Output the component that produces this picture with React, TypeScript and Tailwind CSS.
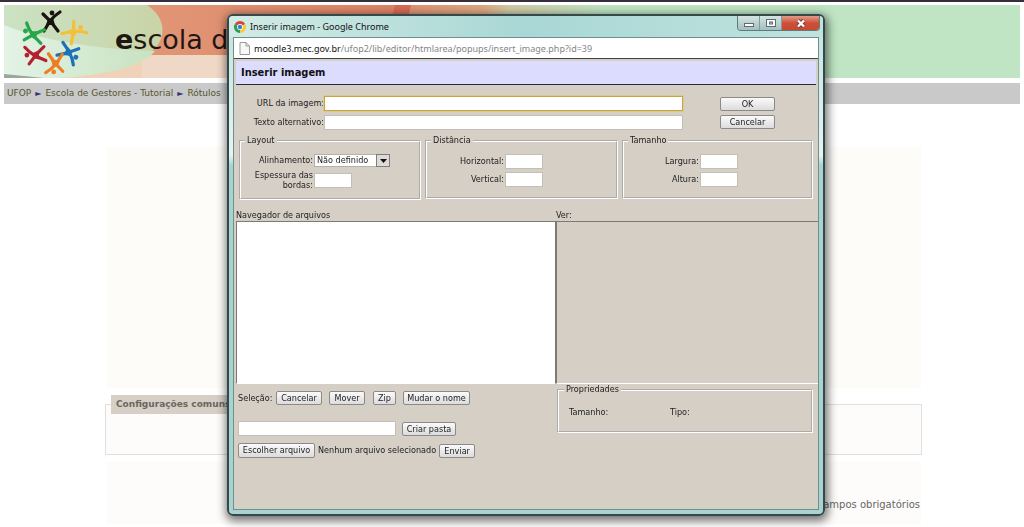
import { useState, type ReactNode } from "react";

const figures = [
  { x: 47, y: 16, turn: 0, color: "#17130f" },
  { x: 70, y: 27, turn: 48, color: "#f6bf3a" },
  { x: 65, y: 48, turn: 115, color: "#1d71b8" },
  { x: 51, y: 59, turn: 182, color: "#ec7f22" },
  { x: 31, y: 50, turn: 262, color: "#b5202f" },
  { x: 29, y: 29, turn: 285, color: "#27a64b" },
];

function BannerArt() {
  return (
    <svg className="absolute top-0 left-0" width="600" height="73" viewBox="0 0 600 73" aria-hidden="true">
      <defs>
        <linearGradient id="fade" x1="0" x2="1">
          <stop offset="0.68" stopColor="#dd9474" />
          <stop offset="0.8" stopColor="#dba983" />
          <stop offset="0.84" stopColor="#cfc9a4" />
          <stop offset="1" stopColor="#bfe5c4" />
        </linearGradient>
        <linearGradient id="salmon" x1="0" x2="1">
          <stop offset="0" stopColor="#e3a07e" />
          <stop offset="1" stopColor="#dd8467" />
        </linearGradient>
        <linearGradient id="leaf" x1="0" x2="1">
          <stop offset="0" stopColor="#cbe2c4" />
          <stop offset="1" stopColor="#c9d4a6" />
        </linearGradient>
        <linearGradient id="mint" x1="0" x2="1">
          <stop offset="0" stopColor="#e3f3e6" />
          <stop offset="1" stopColor="#c8e2c0" />
        </linearGradient>
      </defs>
      <rect width="600" height="73" fill="url(#fade)" />
      <rect width="392" height="52" fill="url(#salmon)" />
      <path d="M391 0h16l-12 52h-16z" fill="#d66b55" />
      <rect y="50" width="392" height="23" fill="#f0d8c6" />
      <path d="M0 52h138v21H0z" fill="#eed3b8" />
      <path d="M0 0h143c14 9 20 24 12 38-10 18-50 32-105 34L0 73z" fill="url(#leaf)" />
      <path d="M0 20c30 12 80 24 151 26-12 15-50 25-100 27H0z" fill="url(#mint)" />
      <path d="M0 69l40 4H0z" fill="#9aa79a" />
      {figures.map((f) => (
        <g key={f.color} transform={`translate(${f.x} ${f.y}) rotate(${f.turn})`} stroke={f.color} fill={f.color}>
          <path d="M-8-7Q-4-3-1 0Q4-6 9-9M-1 0Q-4 5-7 10M0 1Q4 6 7 10" fill="none" strokeWidth="3.200" strokeLinecap="round" />
          <path d="M-3-2L2-3L4 4L-5 4z" stroke="none" />
          <circle cx="1" cy="-8" r="2.400" stroke="none" />
        </g>
      ))}
    </svg>
  );
}

function ChromeIcon() {
  return (
    <svg width="12" height="12" viewBox="0 0 24 24" aria-hidden="true">
      <path d="M12 12L1.600 6A12 12 0 0 1 22.400 6z" fill="#dc4437" />
      <path d="M12 12L22.400 6A12 12 0 0 1 12 24z" fill="#fbc934" />
      <path d="M12 12L12 24A12 12 0 0 1 1.600 6z" fill="#2f9e4f" />
      <circle cx="12" cy="12" r="5.800" fill="#fff" />
      <circle cx="12" cy="12" r="4.400" fill="#3f7fd0" />
    </svg>
  );
}

function PageIcon() {
  return (
    <svg width="11" height="13" viewBox="0 0 11 13" aria-hidden="true">
      <path d="M1 .5h6l3.500 3.500v8.500H1z" fill="#f7f7f7" stroke="#9a9a9a" />
      <path d="M7 .5V4h3.500" fill="none" stroke="#9a9a9a" />
    </svg>
  );
}

function Button({ children, className = "" }: { children: ReactNode; className?: string }) {
  return (
    <button
      type="button"
      className={`h-[14px] rounded-[2px] border border-[#8a8a8a] bg-linear-to-b from-[#fafafa] to-[#dcdcdc] text-center leading-[12px] whitespace-nowrap text-[#1c1c1c] ${className}`}
    >
      {children}
    </button>
  );
}

const box = "h-[15px] border border-[#c3beb6] bg-white px-px outline-none";
const group = "border-2 border-white [border-style:groove]";

function SizeField({ id, label }: { id: string; label: string }) {
  return (
    <div className="flex items-center gap-px">
      <label htmlFor={id} className="flex-1 text-right">{label}</label>
      <input id={id} type="text" className={`${box} w-[38px]`} />
    </div>
  );
}

function WindowButtons() {
  return (
    <div className="flex h-[15px] overflow-hidden rounded-b-[4px] border border-t-0 border-[#5d7c7d]">
      <button type="button" aria-label="Minimizar" className="flex w-[22px] items-center justify-center border-r border-[#7f9c9c] bg-linear-to-b from-[#d5e4e3] to-[#a3bfbe]">
        <svg width="10" height="10" viewBox="0 0 10 10"><rect x=".5" y="5.500" width="9" height="3" fill="#fff" stroke="#5c6b70" /></svg>
      </button>
      <button type="button" aria-label="Maximizar" className="flex w-[22px] items-center justify-center border-r border-[#7f9c9c] bg-linear-to-b from-[#d5e4e3] to-[#a3bfbe]">
        <svg width="10" height="10" viewBox="0 0 10 10"><rect x=".5" y="1.500" width="9" height="7" fill="#fff" stroke="#5c6b70" /><rect x="3.500" y="4" width="3" height="2" fill="#b9cccc" stroke="#5c6b70" /></svg>
      </button>
      <button type="button" aria-label="Fechar" className="flex w-[37px] items-center justify-center bg-linear-to-b from-[#e29a8b] via-[#cc4f38] to-[#c9492f]">
        <svg width="10" height="9" viewBox="0 0 10 9"><path d="M2 1.500L8 7.500M8 1.500L2 7.500" stroke="#6d3a35" strokeWidth="4" /><path d="M2 1.500L8 7.500M8 1.500L2 7.500" stroke="#fff" strokeWidth="2.400" /></svg>
      </button>
    </div>
  );
}

function ImageWindow() {
  const [file, setFile] = useState("Nenhum arquivo selecionado");
  return (
    <div
      role="dialog"
      aria-labelledby="window-title"
      className="absolute top-[12px] left-[227px] w-[598px] rounded-[6px] border-2 border-[#34494b] bg-linear-to-b from-[#c3e3de] via-[#e6f3f1] via-28% to-[#a9d3ce] to-30% px-[4px] pb-[4px] shadow-[1px_3px_10px_2px_rgba(0,0,0,0.55)]"
    >
      <div className="-mx-[4px] flex h-[21px] items-start justify-between rounded-t-[4px] bg-linear-to-r from-[#d2ebe6] via-[#a9d7d5] to-[#c0e3de] pr-[3px] pl-[5px] font-['Noto_Sans',sans-serif] text-[9px] text-[#111]">
        <div className="flex h-[21px] items-center gap-[4px]">
          <ChromeIcon />
          <span id="window-title">Inserir imagem - Google Chrome</span>
        </div>
        <WindowButtons />
      </div>
      <div className="border border-[#6d8f8e] bg-[#d5cfc6] font-['DejaVu_Sans_Condensed','DejaVu_Sans',sans-serif] text-[9px] leading-[11px] text-[#1c1c1c]">
        <div className="flex h-[21px] items-center gap-[4px] border-b border-[#444] bg-white pl-[5px] font-['Noto_Sans',sans-serif] text-[#858585]">
          <PageIcon />
          <span><span className="text-[#111]">moodle3.mec.gov.br</span>/ufop2/lib/editor/htmlarea/popups/insert_image.php?id=39</span>
        </div>
        <h1 className="mx-[2px] mt-[2px] h-[24px] border-b border-[#2c2838] bg-[#dcdcfe] pl-[5px] text-[11px] leading-[23px] font-bold text-[#111]">Inserir imagem</h1>

        <form onSubmit={(e) => e.preventDefault()}>
          <div className="mt-[11px] flex justify-between pr-[43px] pl-[2px]">
            <div className="flex flex-col gap-[4px]">
              <div className="flex items-center">
                <label htmlFor="url" className="w-[88px] text-right">URL da imagem:</label>
                <input id="url" type="text" autoFocus className="h-[15px] w-[359px] border border-[#c9a540] bg-white px-px outline-1 outline-[#dcc98f]" />
              </div>
              <div className="flex items-center">
                <label htmlFor="alt" className="w-[88px] text-right">Texto alternativo:</label>
                <input id="alt" type="text" className={`${box} w-[359px]`} />
              </div>
            </div>
            <div className="flex w-[55px] flex-col gap-[4px] pt-px">
              <Button>OK</Button>
              <Button>Cancelar</Button>
            </div>
          </div>

          <div className="mt-[5px] flex items-start gap-[4px] pr-[5px] pl-[5px]">
            <fieldset className={`${group} h-[65px] w-[182px] pl-[10px]`}>
              <legend className="-ml-[6px] px-[2px]">Layout</legend>
              <div className="mt-[8px] flex items-center gap-px">
                <label htmlFor="align" className="w-[62px] text-right whitespace-nowrap">Alinhamento:</label>
                <div className="relative">
                  <select id="align" className="block h-[13px] w-[76px] appearance-none border border-[#b5b0a8] bg-white pl-[2px] leading-[11px] outline-none">
                    <option>Não definido</option>
                  </select>
                  <span className="pointer-events-none absolute top-0 right-0 flex h-[13px] w-[14px] items-center justify-center border border-[#7d7d7d] bg-[#dedbd5]">
                    <svg width="7" height="4" viewBox="0 0 7 4"><path d="M0 0h7L3.500 4z" fill="#111" /></svg>
                  </span>
                </div>
              </div>
              <div className="mt-[3px] flex items-center gap-px">
                <label htmlFor="border" className="w-[62px] text-right leading-[10px]">Espessura das bordas:</label>
                <input id="border" type="text" className={`${box} w-[38px]`} />
              </div>
            </fieldset>
            <fieldset className={`${group} h-[64px] w-[193px] pr-[73px]`}>
              <legend className="ml-[4px] px-[2px]">Distância</legend>
              <div className="mt-[8px] flex flex-col gap-[3px]">
                <SizeField id="horizontal" label="Horizontal:" />
                <SizeField id="vertical" label="Vertical:" />
              </div>
            </fieldset>
            <fieldset className={`${group} h-[64px] flex-1 pr-[73px]`}>
              <legend className="ml-[4px] px-[2px]">Tamanho</legend>
              <div className="mt-[8px] flex flex-col gap-[3px]">
                <SizeField id="width" label="Largura:" />
                <SizeField id="height" label="Altura:" />
              </div>
            </fieldset>
          </div>
        </form>

        <div className="mt-[9px] grid grid-cols-[320px_1fr] pl-[2px]">
          <h2 className="leading-[12px]">Navegador de arquivos</h2>
          <h2 className="leading-[12px]">Ver:</h2>
          <div className="h-[163px] border border-[#7d7a76] border-b-white bg-white" />
          <div className="h-[163px] border border-r-0 border-[#7d7a76] border-b-white" />
        </div>

        <div className="grid grid-cols-[319px_1fr] pr-[5px] pb-[51px] pl-[4px]">
          <div className="pt-[7px]">
            <div className="flex items-center">
              <span className="w-[38px] whitespace-nowrap">Seleção:</span>
              <Button className="w-[46px]">Cancelar</Button>
              <Button className="ml-[7px] w-[36px]">Mover</Button>
              <Button className="ml-[8px] w-[23px]">Zip</Button>
              <Button className="ml-[7px] w-[67px]">Mudar o nome</Button>
            </div>
            <div className="mt-[16px] flex items-center gap-[6px]">
              <input type="text" aria-label="Criar pasta" className={`${box} w-[158px]`} />
              <Button className="w-[54px]">Criar pasta</Button>
            </div>
            <div className="mt-[7px] flex items-center gap-[3px]">
              <input id="file" type="file" className="sr-only" onChange={(e) => setFile(e.target.files?.[0]?.name ?? "")} />
              <label htmlFor="file" className="h-[15px] w-[77px] rounded-[2px] border border-[#8a8a8a] bg-linear-to-b from-[#fafafa] to-[#dcdcdc] text-center leading-[13px] whitespace-nowrap">Escolher arquivo</label>
              <span className="whitespace-nowrap">{file}</span>
              <Button className="w-[36px]">Enviar</Button>
            </div>
          </div>
          <fieldset className={`${group} h-[49px] pl-[10px]`}>
            <legend className="-ml-[5px] px-[2px]">Propriedades</legend>
            <div className="mt-[12px] grid grid-cols-[101px_1fr]">
              <span>Tamanho:</span>
              <span>Tipo:</span>
            </div>
          </fieldset>
        </div>
      </div>
    </div>
  );
}

export default function App() {
  return (
    <div className="relative h-screen overflow-hidden border-t-2 border-[#352f3d] bg-white font-['DejaVu_Sans',Verdana,sans-serif] text-[9px]">
      <header className="relative mx-[4px] mt-[3px] h-[73px] overflow-hidden bg-[#bfe5c4]">
        <BannerArt />
        <p className="relative pt-[18px] pl-[111px] text-[27px] leading-[34px] text-[#1f1712]"><b>e</b>scola de</p>
      </header>
      <nav className="mx-[4px] mt-[5px] flex h-[21px] items-center gap-[4px] bg-[#c9c9c9] pl-[3px] text-[#55552f]">
        <a href="#ufop">UFOP</a>
        <span className="text-[8px] text-[#33307c]">►</span>
        <a href="#tutorial">Escola de Gestores - Tutorial</a>
        <span className="text-[8px] text-[#33307c]">►</span>
        <a href="#rotulos">Rótulos</a>
      </nav>
      <main className="mt-[43px] mr-[102px] ml-[105px]">
        <div className="mx-px h-[241px] bg-[#fdfcf9]" />
        <fieldset className="mt-[7px] h-[60px] border border-[#e0e0e0] bg-[#fefcfa] pl-[5px]">
          <legend className="bg-[#d5cfc6] px-[5px] leading-[19px] font-bold text-[#6a665f]">Configurações comuns</legend>
        </fieldset>
        <div className="mx-px mt-[7px] h-[62px] bg-[#fefcfa] pt-[36px] pr-px text-right text-[10px] leading-[14px] text-[#666]">campos obrigatórios</div>
      </main>
      <ImageWindow />
    </div>
  );
}
